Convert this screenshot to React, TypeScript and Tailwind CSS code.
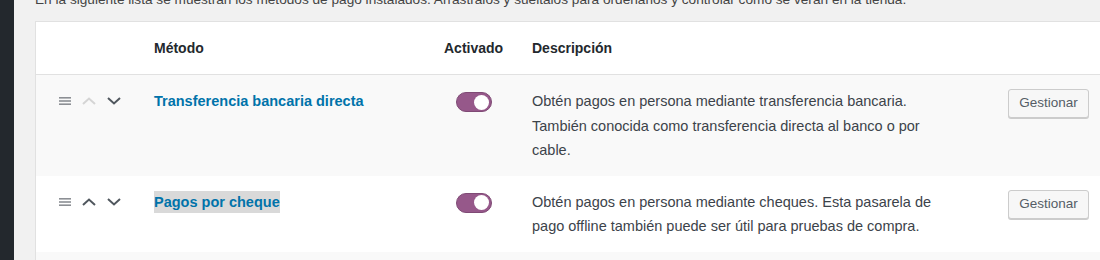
import React from "react";

const font = { fontFamily: '"Liberation Sans", Arial, sans-serif' };

function Hamburger() {
  return (
    <svg width="12" height="8" viewBox="0 0 12 8" className="block">
      <rect x="0" y="0" width="12" height="1.6" fill="#8c8f94" />
      <rect x="0" y="3.2" width="12" height="1.6" fill="#8c8f94" />
      <rect x="0" y="6.4" width="12" height="1.6" fill="#8c8f94" />
    </svg>
  );
}

function Chevron({ up, color }: { up?: boolean; color: string }) {
  return (
    <svg width="14" height="8" viewBox="0 0 14 8" className="block">
      <path
        d={up ? "M1 7 L7 1.5 L13 7" : "M1 1 L7 6.5 L13 1"}
        fill="none"
        stroke={color}
        strokeWidth="2"
      />
    </svg>
  );
}

function Toggle() {
  return (
    <div className="w-[36px] h-[20px] rounded-full bg-[#96588a] border border-[#7f4a75] flex items-center justify-end pr-[2px]">
      <div className="w-[15px] h-[15px] rounded-full bg-white" />
    </div>
  );
}

function Row({
  name,
  desc,
  upDisabled,
  striped,
  selected,
}: {
  name: string;
  desc: string;
  upDisabled?: boolean;
  striped?: boolean;
  selected?: boolean;
}) {
  return (
    <div
      className={`grid grid-cols-[118px_290px_88px_476px_200px] pt-[14px] pb-[13px] ${
        striped ? "bg-[#f9f9f9]" : "bg-white"
      }`}
    >
      <div className="pl-[23px] flex items-center gap-[11px] h-[24.5px]">
        <Hamburger />
        <Chevron up color={upDisabled ? "#d5d5d5" : "#50575e"} />
        <Chevron color="#50575e" />
      </div>
      <div className="leading-[24.5px] text-[14.5px] font-bold text-[#0073aa]">
        <span className={selected ? "bg-[#d9d9d9] py-[3px]" : ""}>{name}</span>
      </div>
      <div className="pl-[12px] pt-[3px]">
        <Toggle />
      </div>
      <div className="text-[14.5px] leading-[24.5px] text-[#3c434a] pr-[62px]">{desc}</div>
      <div>
        <button className="h-[29px] px-[10px] w-[81px] rounded-[3px] border border-[#cccccc] bg-[#f7f7f7] shadow-[0_1px_0_#cccccc] text-[13.5px] text-[#555d66]">
          Gestionar
        </button>
      </div>
    </div>
  );
}

export default function App() {
  return (
    <div className="flex w-[1100px] h-[260px] overflow-hidden" style={font}>
      <div className="w-[14px] shrink-0 bg-[#23282d]" />
      <div className="flex-1 bg-[#f1f1f1] pl-[21px] overflow-hidden">
        <p className="mt-[-10px] h-[31px] text-[13.65px] leading-[20px] text-[#444] whitespace-nowrap">
          En la siguiente lista se muestran los métodos de pago instalados. Arrástralos y suéltalos para ordenarlos y controlar cómo se verán en la tienda.
        </p>
        <div className="w-[1200px] border-l border-t border-[#e1e1e1] bg-white">
          <div className="grid grid-cols-[118px_290px_88px_476px_200px] h-[53px] items-center border-b border-[#e1e1e1] text-[14px] font-bold text-[#23282d]">
            <div />
            <div>Método</div>
            <div>Activado</div>
            <div>Descripción</div>
            <div />
          </div>
          <Row
            striped
            upDisabled
            name="Transferencia bancaria directa"
            desc="Obtén pagos en persona mediante transferencia bancaria. También conocida como transferencia directa al banco o por cable."
          />
          <Row
            selected
            name="Pagos por cheque"
            desc="Obtén pagos en persona mediante cheques. Esta pasarela de pago offline también puede ser útil para pruebas de compra."
          />
          <div className="h-[20px] bg-[#f9f9f9]" />
        </div>
      </div>
    </div>
  );
}
